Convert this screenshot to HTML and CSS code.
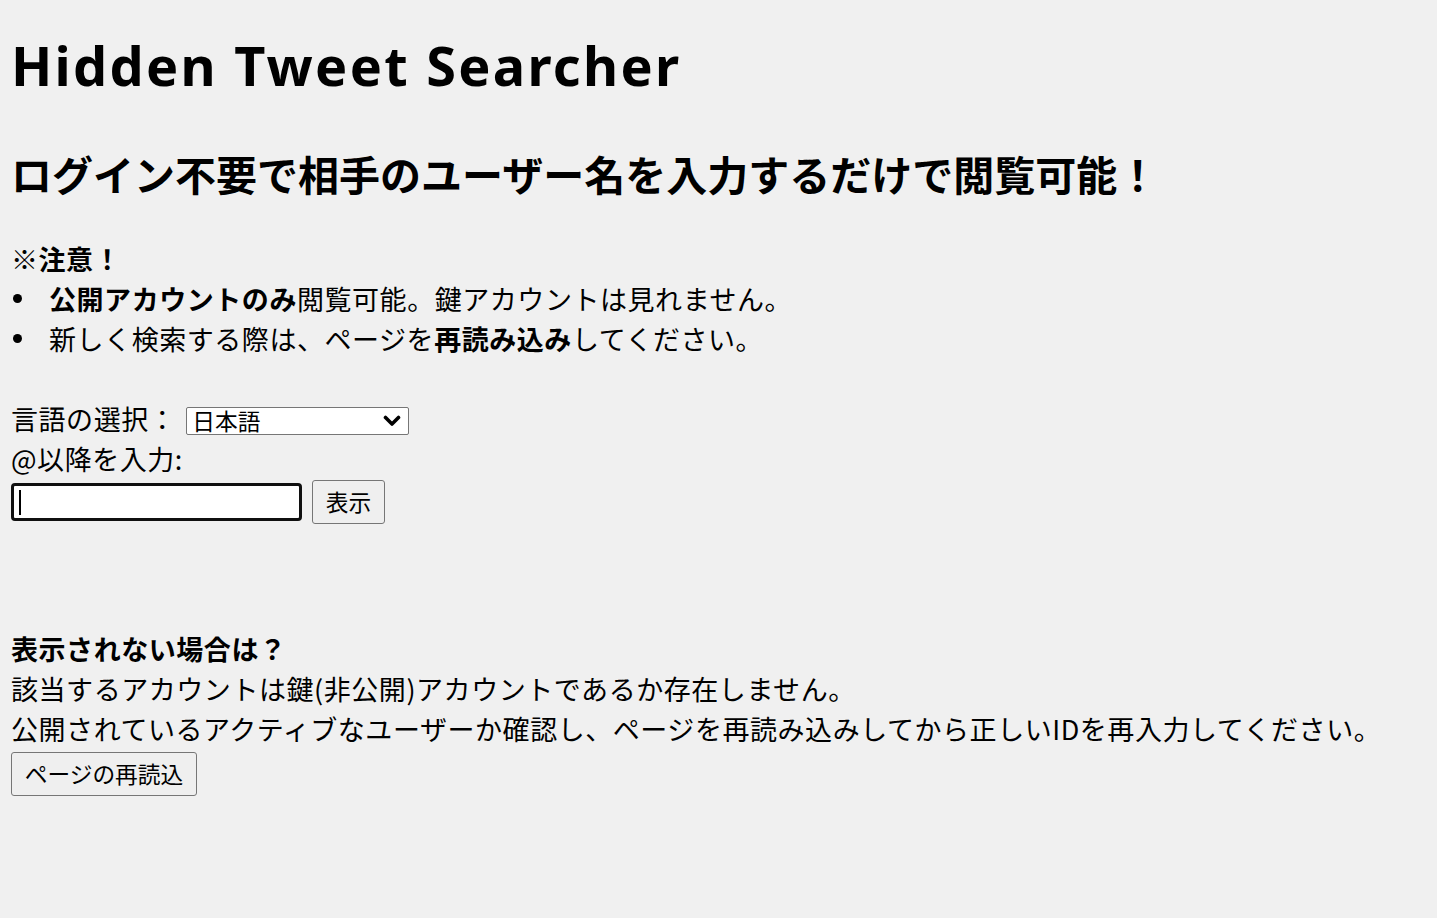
FILE: index.html
```html
<!DOCTYPE html>
<html lang="ja">
<head>
<meta charset="utf-8">
<title>Hidden Tweet Searcher</title>
<link rel="stylesheet" href="styles.css">
</head>
<body>
<main class="page">
  <h1 class="title">Hidden Tweet Searcher</h1>
  <h2 class="subtitle">ログイン不要で相手のユーザー名を入力するだけで閲覧可能！</h2>

  <p class="notice-head"><b>※注意！</b></p>
  <ul class="notice-list">
    <li><b>公開アカウントのみ</b>閲覧可能。鍵アカウントは見れません。</li>
    <li>新しく検索する際は、ページを<b>再読み込み</b>してください。</li>
  </ul>

  <form class="search">
    <div class="lang-row">
      <label class="lang-label" for="lang">言語の選択：</label>
      <span class="select-wrap">
        <select id="lang" class="lang-select">
          <option>日本語</option>
          <option>English</option>
        </select>
        <svg class="chevron" viewBox="0 0 18 12" width="18" height="12" aria-hidden="true">
          <path d="M2.5 2.5 L9 9 L15.5 2.5" fill="none" stroke="#000" stroke-width="3.6" stroke-linecap="round" stroke-linejoin="round"/>
        </svg>
      </span>
    </div>
    <div class="user-label">@以降を入力:</div>
    <div class="input-row">
      <span class="input-wrap">
        <input class="user-input" type="text" aria-label="ユーザー名">
        <span class="caret"></span>
      </span>
      <button type="button" class="btn show-btn">表示</button>
    </div>
  </form>

  <section class="help">
    <p class="help-head"><b>表示されない場合は？</b></p>
    <p class="help-text">該当するアカウントは鍵(非公開)アカウントであるか存在しません。</p>
    <p class="help-text">公開されているアクティブなユーザーか確認し、ページを再読み込みしてから正しいIDを再入力してください。</p>
    <button type="button" class="btn reload-btn">ページの再読込</button>
  </section>
</main>
</body>
</html>
```

FILE: styles.css
```css
html, body {
  margin: 0;
  padding: 0;
}

body {
  background: #f0f0f0;
  color: #000;
  font-family: "Noto Sans CJK JP", "Noto Sans", sans-serif;
  font-size: 27px;
  line-height: 40px;
  letter-spacing: 0.55px;
}

.page {
  padding: 35px 11px 0;
}

.title {
  margin: 0;
  font-family: "Noto Sans", "Noto Sans CJK JP", sans-serif;
  font-size: 54px;
  line-height: 60px;
  font-weight: 700;
  letter-spacing: 2.3px;
}

.subtitle {
  margin: 53px 0 0;
  font-size: 41px;
  line-height: 50px;
  font-weight: 700;
  letter-spacing: 0;
}

.notice-head {
  margin: 41px 0 0;
}

.notice-head b,
.notice-list b,
.help-head b {
  font-weight: 700;
}

.notice-list {
  list-style: none;
  margin: 0;
  padding: 0 0 0 38px;
}

.notice-list li {
  position: relative;
}

.notice-list li::before {
  content: "";
  position: absolute;
  left: -36px;
  top: 15px;
  width: 9px;
  height: 9px;
  border-radius: 50%;
  background: #000;
}

.search {
  margin: 40px 0 0;
}

.lang-row {
  display: flex;
  align-items: flex-start;
  height: 40px;
}

.lang-label {
  margin-right: 10px;
}

.select-wrap {
  position: relative;
  display: block;
  width: 223px;
  height: 28px;
  margin-top: 8px;
}

.lang-select {
  appearance: none;
  -webkit-appearance: none;
  display: block;
  box-sizing: border-box;
  width: 223px;
  height: 28px;
  margin: 0;
  padding: 0 0 0 5px;
  border: 1px solid #767676;
  border-radius: 2px;
  background: #fff;
  color: #000;
  font-family: "Noto Sans CJK JP", sans-serif;
  font-size: 22.7px;
  line-height: 26px;
  letter-spacing: 0;
}

.chevron {
  position: absolute;
  right: 8px;
  top: 8px;
  pointer-events: none;
}

.user-label {
  height: 40px;
}

.input-row {
  display: flex;
  align-items: center;
  gap: 10px;
  margin-top: 1px;
  height: 44px;
}

.input-wrap {
  position: relative;
  display: block;
}

.user-input {
  display: block;
  box-sizing: border-box;
  width: 291px;
  height: 38px;
  margin: 0;
  padding: 0 6px;
  border: 3px solid #101010;
  border-radius: 4px;
  background: #fff;
  outline: none;
  font-size: 22.7px;
}

.caret {
  position: absolute;
  left: 8px;
  top: 7px;
  width: 2px;
  height: 25px;
  background: #000;
}

.btn {
  box-sizing: border-box;
  height: 44px;
  margin: 0;
  padding: 0 12px;
  border: 1px solid #767676;
  border-radius: 3px;
  background: #efefef;
  color: #000;
  font-family: "Noto Sans CJK JP", sans-serif;
  font-size: 22.7px;
  line-height: 42px;
  letter-spacing: 0;
}

.show-btn {
  width: 73px;
}

.reload-btn {
  width: 186px;
  margin-top: 3px;
  display: block;
}

.help {
  margin-top: 105px;
}

.help p {
  margin: 0;
}
```
